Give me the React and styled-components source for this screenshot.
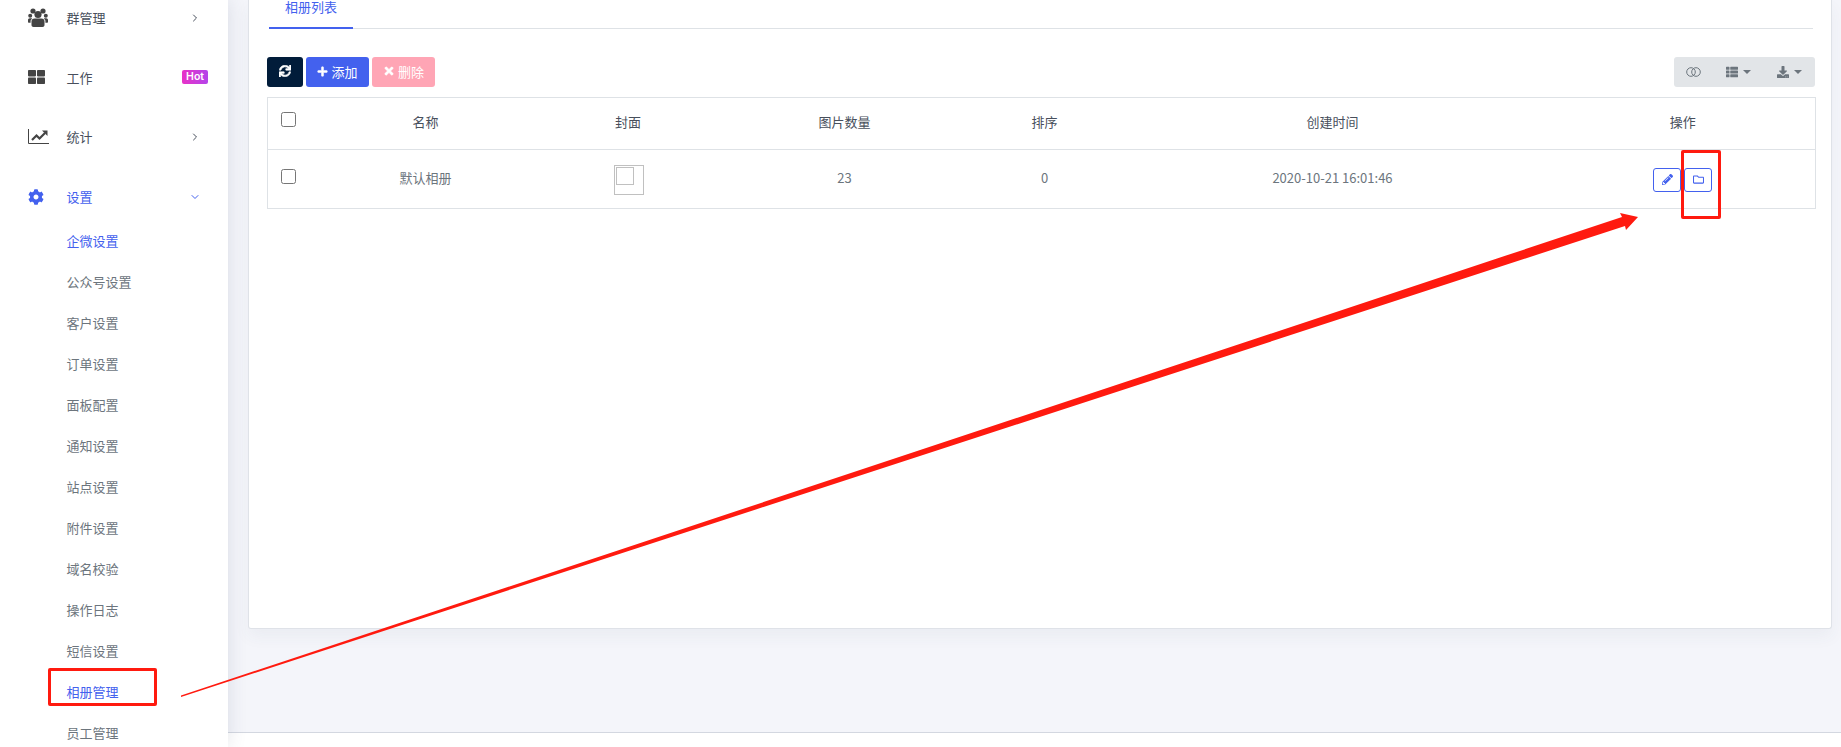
import React from 'react';
import styled, { createGlobalStyle } from 'styled-components';
import { FaCog, FaSync, FaPlus, FaTimes, FaThList, FaDownload, FaPencilAlt, FaRegFolder } from 'react-icons/fa';
import { FiChevronRight, FiChevronDown } from 'react-icons/fi';

const GlobalStyle = createGlobalStyle`
  html, body {
    margin: 0;
    height: 100%;
    overflow: hidden;
  }
  body {
    font-family: "Noto Sans CJK SC", "Inter", sans-serif;
    background: #f4f5fa;
  }
`;

const Page = styled.div`
  position: relative;
  display: flex;
  width: 1841px;
  height: 747px;
  overflow: hidden;
`;

const Sidebar = styled.aside`
  width: 228px;
  height: 747px;
  flex: none;
  background: #fff;
  box-shadow: 0 0 18px rgba(60, 70, 100, 0.14);
  z-index: 1;
  overflow: hidden;
`;

const MenuItem = styled.div`
  display: flex;
  align-items: center;
  height: 59.6px;
  padding: 0 27px 0 28px;
  margin-top: ${({ $first }) => ($first ? '-12px' : '0')};
  color: ${({ $active }) => ($active ? '#4361ee' : '#484f5c')};
  font-size: 13px;
`;

const MenuIcon = styled.span`
  display: flex;
  width: 38.5px;
  font-size: 16px;
  color: ${({ $active }) => ($active ? '#4361ee' : '#444')};
`;

const MenuLabel = styled.span`
  flex: 1;
`;

const Hot = styled.span`
  padding: 0 4px;
  height: 14px;
  border-radius: 2px;
  background: linear-gradient(90deg, #e832c8, #b444ea);
  color: #fff;
  font: 600 10.5px/14px "Inter", sans-serif;
  margin-right: -7px;
`;

const SubMenu = styled.div`
  display: flex;
  flex-direction: column;
  padding-left: 66.5px;
  margin-top: -6px;
`;

const SubItem = styled.div`
  height: 41px;
  line-height: 41px;
  font-size: 13px;
  color: ${({ $active }) => ($active ? '#4361ee' : '#6c757d')};
`;

const Main = styled.main`
  flex: 1;
  display: flex;
  flex-direction: column;
  min-width: 0;
`;

const Content = styled.div`
  flex: 1;
  padding: 0 9px 0 20px;
`;

const Card = styled.section`
  height: 629px;
  box-sizing: border-box;
  background: #fff;
  border: 1px solid #dfe2e8;
  border-top: none;
  border-radius: 0 0 3px 3px;
  box-shadow: 0 8px 16px rgba(60, 70, 100, 0.05);
  padding: 0 16px 0 18px;
`;

const Tabs = styled.div`
  display: flex;
  height: 29px;
  margin: 0 2px 0 2px;
  border-bottom: 1px solid #dee2e6;
  box-sizing: border-box;
`;

const Tab = styled.div`
  width: 84px;
  height: 29px;
  box-sizing: border-box;
  text-align: center;
  font-size: 13px;
  line-height: 14px;
  color: #4361ee;
  border-bottom: 2px solid #4361ee;
`;

const Toolbar = styled.div`
  display: flex;
  justify-content: space-between;
  margin-top: 28px;
  margin-bottom: 10px;
`;

const ButtonGroup = styled.div`
  display: flex;
  gap: 3px;
`;

const ToolButton = styled.button`
  display: flex;
  align-items: center;
  justify-content: center;
  gap: 3px;
  width: ${({ $width }) => $width}px;
  height: 30px;
  padding: 0 0 2px;
  border: none;
  border-radius: 3px;
  background: ${({ $bg }) => $bg};
  color: #fff;
  font-family: inherit;
  font-size: 13px;

  svg {
    stroke: currentColor;
    stroke-width: 24;
  }
`;

const ViewGroup = styled.div`
  display: flex;
  align-items: center;
  width: 141px;
  height: 30px;
  background: #e2e5e8;
  border-radius: 3px;
  color: #6c757d;
`;

const ViewItem = styled.span`
  display: flex;
  align-items: center;
  justify-content: center;
  gap: 5px;
  width: ${({ $width }) => $width}px;
  font-size: 12px;
`;

const Caret = styled.i`
  width: 0;
  height: 0;
  border-left: 4px solid transparent;
  border-right: 4px solid transparent;
  border-top: 4px solid #6c757d;
`;

const Table = styled.table`
  width: 1548px;
  border-collapse: collapse;
  table-layout: fixed;
  border: 1px solid #dee2e6;
  font-size: 13px;
  text-align: center;
`;

const Th = styled.th`
  height: 52px;
  padding: 0 0 4px;
  box-sizing: border-box;
  font-weight: 400;
  color: #484f5c;
  border-bottom: 1px solid #dee2e6;
`;

const Td = styled.td`
  height: 59px;
  padding: 0 0 4px;
  box-sizing: border-box;
  color: #6c757d;
`;

const Check = styled.span`
  display: block;
  width: 13px;
  height: 13px;
  margin: ${({ $row }) => ($row ? '-1px' : '-4px')} auto 0;
  border: 1px solid #767676;
  border-radius: 2.5px;
  background: #fff;
`;

const Cover = styled.div`
  width: 30px;
  height: 30px;
  margin: 5px 0 0 calc(50% - 14px);
  padding: 1px;
  box-sizing: border-box;
  border: 1px solid #c0c0c0;
`;

const CoverBroken = styled.div`
  width: 16px;
  height: 16px;
  border: 1px solid #c0c0c0;
`;

const Actions = styled.div`
  display: flex;
  justify-content: center;
  gap: 3px;
  margin-top: 5px;
`;

const ActionButton = styled.button`
  display: flex;
  align-items: center;
  justify-content: center;
  width: 28px;
  height: 24px;
  padding: 0;
  border: 1px solid #4361ee;
  border-radius: 3px;
  background: #fff;
  color: #4361ee;
  font-size: 11px;
`;

const Footer = styled.footer`
  height: 14px;
  background: #fff;
  border-top: 1px solid #d3d7e0;
`;

// the red marks someone drew over the screenshot
const Mark = styled.div`
  position: absolute;
  left: ${({ $x }) => $x}px;
  top: ${({ $y }) => $y}px;
  width: ${({ $w }) => $w}px;
  height: ${({ $h }) => $h}px;
  box-sizing: border-box;
  border: 3px solid #ff1a0f;
  border-radius: 2px;
  z-index: 3;
`;

const ArrowLayer = styled.svg`
  position: absolute;
  left: 0;
  top: 0;
  z-index: 3;
  pointer-events: none;
`;

const subItems = ['企微设置', '公众号设置', '客户设置', '订单设置', '面板配置', '通知设置', '站点设置', '附件设置', '域名校验', '操作日志', '短信设置', '相册管理', '员工管理'];

const UsersIcon = () => (
  <svg width="20" height="19" viewBox="0 0 20 19" fill="currentColor">
    <circle cx="5" cy="3" r="2.6" />
    <circle cx="15" cy="3" r="2.6" />
    <circle cx="10" cy="6.5" r="3.6" />
    <circle cx="2.2" cy="7.8" r="2" />
    <circle cx="17.8" cy="7.8" r="2" />
    <path d="M5.5 19c-1.2 0-2-.8-2-2v-3.5c0-1.8 1.2-3 3-3h7c1.8 0 3 1.2 3 3V17c0 1.2-.8 2-2 2z" />
    <path d="M0 12c0-1 .8-1.8 1.8-1.8h2.4L2.6 12.5v2.2H1c-.6 0-1-.4-1-1z" />
    <path d="M20 12c0-1-.8-1.8-1.8-1.8h-2.4l1.6 2.3v2.2H19c.6 0 1-.4 1-1z" />
  </svg>
);

const GridIcon = () => (
  <svg width="17" height="14" viewBox="0 0 17 14" fill="currentColor">
    <rect x="0" y="0" width="8" height="6.4" rx="0.8" />
    <rect x="9" y="0" width="8" height="6.4" rx="0.8" />
    <rect x="0" y="7.6" width="8" height="6.4" rx="0.8" />
    <rect x="9" y="7.6" width="8" height="6.4" rx="0.8" />
  </svg>
);

const ChartIcon = () => (
  <svg width="21" height="15" viewBox="0 0 21 15" fill="none" stroke="currentColor">
    <path d="M0.5 0V14.5H21" strokeWidth="1" />
    <path d="M4 11L8.5 6.5L11.5 9.5L17 4" strokeWidth="2.2" />
    <path d="M14 1.5H19.5V7z" fill="currentColor" stroke="none" />
  </svg>
);

const RingsIcon = () => (
  <svg width="15" height="10" viewBox="0 0 15 10" fill="none" stroke="#6c757d" strokeWidth="1">
    <circle cx="5" cy="5" r="4.3" />
    <circle cx="10" cy="5" r="4.3" />
  </svg>
);

export default function App() {
  return (
    <Page>
      <GlobalStyle />
      <Sidebar>
        <MenuItem $first>
          <MenuIcon><UsersIcon /></MenuIcon>
          <MenuLabel>群管理</MenuLabel>
          <FiChevronRight size={12} />
        </MenuItem>
        <MenuItem>
          <MenuIcon><GridIcon /></MenuIcon>
          <MenuLabel>工作</MenuLabel>
          <Hot>Hot</Hot>
        </MenuItem>
        <MenuItem>
          <MenuIcon><ChartIcon /></MenuIcon>
          <MenuLabel>统计</MenuLabel>
          <FiChevronRight size={12} />
        </MenuItem>
        <MenuItem $active>
          <MenuIcon $active><FaCog /></MenuIcon>
          <MenuLabel>设置</MenuLabel>
          <FiChevronDown size={12} />
        </MenuItem>
        <SubMenu>
          {subItems.map((name, i) => (
            <SubItem key={name} $active={i === 0 || i === 11}>{name}</SubItem>
          ))}
        </SubMenu>
      </Sidebar>
      <Main>
        <Content>
          <Card>
            <Tabs><Tab>相册列表</Tab></Tabs>
            <Toolbar>
              <ButtonGroup>
                <ToolButton $width={36} $bg="#011c3a"><FaSync size={12} /></ToolButton>
                <ToolButton $width={63} $bg="#4361ee"><FaPlus size={11} />添加</ToolButton>
                <ToolButton $width={63} $bg="#ffa5b5"><FaTimes size={12} />删除</ToolButton>
              </ButtonGroup>
              <ViewGroup>
                <ViewItem $width={39}><RingsIcon /></ViewItem>
                <ViewItem $width={51}><FaThList /><Caret /></ViewItem>
                <ViewItem $width={51}><FaDownload /><Caret /></ViewItem>
              </ViewGroup>
            </Toolbar>
            <Table>
              <colgroup>
                <col width="42" />
                <col width="232" />
                <col width="173" />
                <col width="260" />
                <col width="140" />
                <col width="436" />
                <col width="265" />
              </colgroup>
              <thead>
                <tr>
                  <Th><Check /></Th>
                  <Th>名称</Th>
                  <Th>封面</Th>
                  <Th>图片数量</Th>
                  <Th>排序</Th>
                  <Th>创建时间</Th>
                  <Th>操作</Th>
                </tr>
              </thead>
              <tbody>
                <tr>
                  <Td><Check $row /></Td>
                  <Td>默认相册</Td>
                  <Td><Cover><CoverBroken /></Cover></Td>
                  <Td>23</Td>
                  <Td>0</Td>
                  <Td>2020-10-21 16:01:46</Td>
                  <Td>
                    <Actions>
                      <ActionButton><FaPencilAlt /></ActionButton>
                      <ActionButton><FaRegFolder /></ActionButton>
                    </Actions>
                  </Td>
                </tr>
              </tbody>
            </Table>
          </Card>
        </Content>
        <Footer />
      </Main>
      <Mark $x={48} $y={668} $w={109} $h={38} />
      <Mark $x={1681} $y={150} $w={40} $h={69} />
      <ArrowLayer width="1841" height="747" viewBox="0 0 1841 747">
        <polygon points="181,695.5 1622,217 1620,213 1638,217 1626,230 1625,226 181,697" fill="#ff1a0f" />
      </ArrowLayer>
    </Page>
  );
}
